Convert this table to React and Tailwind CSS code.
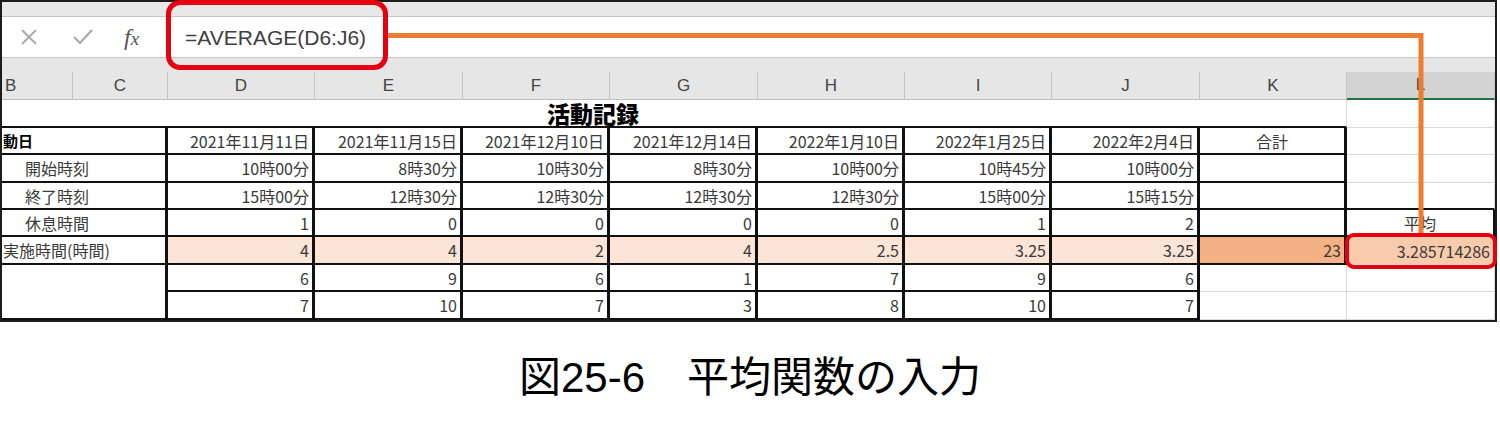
import React from "react";

// column widths of the visible sheet area (B .. L)
const COLS =
  "grid grid-cols-[71px_95px_147px_148px_147px_148px_147px_147px_148px_147px_148px]";

const LETTERS = ["B", "C", "D", "E", "F", "G", "H", "I", "J", "K", "L"];

const ROWS = [
  ["2021年11月11日", "2021年11月15日", "2021年12月10日", "2021年12月14日", "2022年1月10日", "2022年1月25日", "2022年2月4日"],
  ["10時00分", "8時30分", "10時30分", "8時30分", "10時00分", "10時45分", "10時00分"],
  ["15時00分", "12時30分", "12時30分", "12時30分", "12時30分", "15時00分", "15時15分"],
  ["1", "0", "0", "0", "0", "1", "2"],
  ["4", "4", "2", "4", "2.5", "3.25", "3.25"],
  ["6", "9", "6", "1", "7", "9", "6"],
  ["7", "10", "7", "3", "8", "10", "7"],
];

function Num({ children, bg = "" }) {
  return (
    <div
      className={`flex items-center justify-end pr-[3px] border-r-[3px] border-b-2 border-[#111] ${bg}`}
    >
      {children}
    </div>
  );
}

function Label({ children, indent }) {
  return (
    <div
      className={`col-span-2 flex items-center overflow-hidden border-r-[3px] border-b-2 border-[#111] ${
        indent ? "pl-[23px]" : "pl-[1px]"
      }`}
    >
      {children}
    </div>
  );
}

function BlackBox({ children, center, bg = "" }) {
  return (
    <div
      className={`flex items-center border-r-[3px] border-b-2 border-[#111] ${
        center ? "justify-center" : "justify-end pr-[3px]"
      } ${bg}`}
    >
      {children}
    </div>
  );
}

function Grid() {
  return <div className="border-r border-b border-[#d9d9d9]" />;
}

export default function App() {
  return (
    <div className="relative w-[1500px] h-[428px] bg-white overflow-hidden font-['Noto_Sans_CJK_JP',sans-serif]">
      {/* spreadsheet screenshot frame */}
      <div className="w-[1497px] h-[322px] border-2 border-[#1c1c1c] flex flex-col">
        {/* top strip */}
        <div className="h-[15px] bg-[#e8e8e8] border-b border-[#c6c6c6]" />

        {/* formula bar */}
        <div className="h-[41px] bg-white border-b border-[#c6c6c6] flex items-center">
          <div className="w-[162px] flex items-center">
            <svg width="18" height="18" viewBox="0 0 18 18" className="ml-[18px]">
              <path d="M2 2 L16 16 M16 2 L2 16" stroke="#a9a9a9" strokeWidth="1.8" fill="none" />
            </svg>
            <svg width="22" height="18" viewBox="0 0 22 18" className="ml-[34px]">
              <path d="M2 9 L8 15 L20 2" stroke="#a9a9a9" strokeWidth="2.2" fill="none" />
            </svg>
            <span className="ml-[30px] italic text-[#555] font-['Liberation_Serif',serif] text-[24px] leading-none">
              f<span className="text-[19px]">x</span>
            </span>
          </div>
          <div className="pl-[21px] text-[21px] leading-none text-[#404040] font-['Liberation_Sans',sans-serif]">
            =AVERAGE(D6:J6)
          </div>
        </div>

        {/* strip below formula bar */}
        <div className="h-[14px] bg-[#e6e6e6]" />

        {/* column header row */}
        <div className={`${COLS} h-[28px] bg-[#e6e6e6] border-b border-[#bdbdbd] font-['Liberation_Sans',sans-serif] text-[17px] text-[#444]`}>
          {LETTERS.map((l, i) => (
            <div
              key={l}
              className={`flex items-center border-r border-[#c4c4c4] ${
                i === 0 ? "pl-[3px]" : "justify-center"
              } ${i === 10 ? "bg-[#d3d3d3] border-b-2 border-b-[#217346]" : ""}`}
            >
              {l}
            </div>
          ))}
        </div>

        {/* title row */}
        <div className={`${COLS} h-[28px]`}>
          <div className="col-span-10 flex items-center pl-[545px] border-b-2 border-[#111] border-r border-r-[#d9d9d9]">
            <span className="text-[23px] font-black leading-none text-black">活動記録</span>
          </div>
          <Grid />
        </div>

        {/* table body */}
        <div className={`${COLS} grid-rows-[27px_28px_27px_27px_28px_27px_28px] text-[16px] leading-none text-[#3a3a3a]`}>
          {/* row 1 */}
          <Label>
            <span className="text-[15px] font-bold text-black">動日</span>
          </Label>
          {ROWS[0].map((v, i) => (
            <Num key={"a" + i}>{v}</Num>
          ))}
          <BlackBox center>合計</BlackBox>
          <Grid />

          {/* row 2 */}
          <Label indent>開始時刻</Label>
          {ROWS[1].map((v, i) => (
            <Num key={"b" + i}>{v}</Num>
          ))}
          <BlackBox />
          <Grid />

          {/* row 3 */}
          <Label indent>終了時刻</Label>
          {ROWS[2].map((v, i) => (
            <Num key={"c" + i}>{v}</Num>
          ))}
          <BlackBox />
          <div className="border-r border-r-[#d9d9d9] border-b-2 border-b-[#111]" />

          {/* row 4 */}
          <Label indent>休息時間</Label>
          {ROWS[3].map((v, i) => (
            <Num key={"d" + i}>{v}</Num>
          ))}
          <BlackBox />
          <div className="flex items-center justify-center border-r-2 border-b-2 border-[#111]">平均</div>

          {/* row 5 */}
          <Label>実施時間(時間)</Label>
          {ROWS[4].map((v, i) => (
            <Num key={"e" + i} bg="bg-[#fce4d6]">
              {v}
            </Num>
          ))}
          <BlackBox bg="bg-[#f4b183]">23</BlackBox>
          <div className="flex items-center justify-end pr-[4px] bg-[#f8cbad] border-r border-b border-[#d9d9d9]">
            3.285714286
          </div>

          {/* row 6 */}
          <div className="col-span-2 row-span-2 border-r-[3px] border-b-2 border-[#111]" />
          {ROWS[5].map((v, i) => (
            <Num key={"f" + i}>{v}</Num>
          ))}
          <Grid />
          <Grid />

          {/* row 7 */}
          {ROWS[6].map((v, i) => (
            <Num key={"g" + i}>{v}</Num>
          ))}
          <Grid />
          <Grid />
        </div>
      </div>

      {/* caption */}
      <div className="mt-[35px] text-center text-[42px] leading-none text-black font-['Liberation_Sans','Noto_Sans_CJK_JP',sans-serif]">
        図25-6　平均関数の入力
      </div>

      {/* callout: red boxes and orange connector */}
      <svg className="absolute left-0 top-0 pointer-events-none" width="1500" height="330">
        <polyline
          points="388,35.5 1421,35.5 1421,235"
          fill="none"
          stroke="#ed7d31"
          strokeWidth="5"
        />
      </svg>
      <div className="absolute left-[166px] top-0 w-[222px] h-[70px] border-[5px] border-[#e60012] rounded-[14px]" />
      <div className="absolute left-[1345px] top-[233px] w-[152px] h-[36px] border-[4px] border-[#e60012] rounded-[9px]" />
    </div>
  );
}
